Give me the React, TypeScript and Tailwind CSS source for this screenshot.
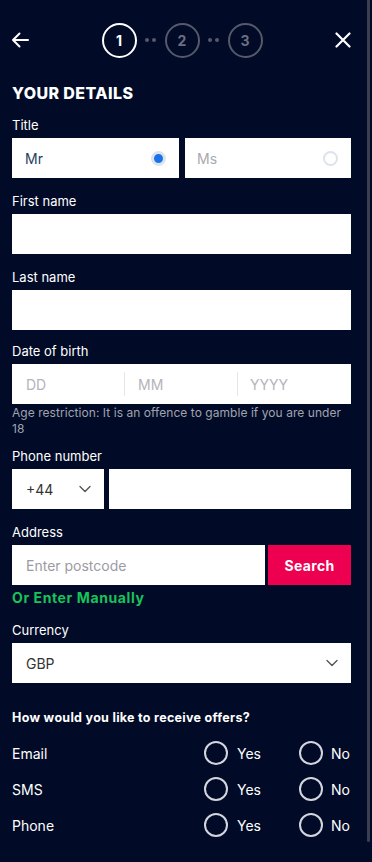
import React from "react";

const font = { fontFamily: "Inter, 'Noto Sans', sans-serif" };

function Label({ children }: { children: React.ReactNode }) {
  return <p className="text-[13px] leading-4 text-white mb-[5px]">{children}</p>;
}

function Chevron() {
  return (
    <svg width="12" height="8" viewBox="0 0 12 8" fill="none">
      <path d="M1 1.5l5 5 5-5" stroke="#555" strokeWidth="1.4" strokeLinecap="round" strokeLinejoin="round" />
    </svg>
  );
}

function Step({ n, active }: { n: number; active?: boolean }) {
  return (
    <div
      className={
        "w-[35px] h-[35px] rounded-full border-2 flex items-center justify-center text-[14px] font-bold " +
        (active ? "border-white text-white" : "border-[#55596b] text-[#6b6f80]")
      }
    >
      {n}
    </div>
  );
}

function Dots() {
  return (
    <div className="w-[28px] flex items-center justify-center gap-[3px]">
      <span className="w-[4px] h-[4px] rounded-full bg-[#55596b]" />
      <span className="w-[4px] h-[4px] rounded-full bg-[#55596b]" />
    </div>
  );
}

function OfferRow({ name }: { name: string }) {
  return (
    <div className="flex items-center h-[36px]">
      <span className="flex-1 text-[14px] text-white">{name}</span>
      <div className="flex items-center w-[147px]">
        <span className="w-[24px] h-[24px] rounded-full border-2 border-[#d3d6de]" />
        <span className="ml-[9px] text-[14px] text-white w-[62px]">Yes</span>
        <span className="w-[24px] h-[24px] rounded-full border-2 border-[#d3d6de]" />
        <span className="ml-[8px] text-[14px] text-white">No</span>
      </div>
    </div>
  );
}

export default function App() {
  return (
    <div className="relative w-[372px] min-h-[862px] bg-[#010b27]" style={font}>
      <div className="absolute right-[2px] top-0 w-[3px] h-[842px] rounded-b bg-[#3b3e50]" />
      <div className="h-[80px] pl-3 pr-[21px] flex items-center justify-between">
        <svg width="18" height="16" viewBox="0 0 18 16" fill="none" className="ml-[-1px]">
          <path d="M17 8H2M8.5 1.5L2 8l6.5 6.5" stroke="white" strokeWidth="2" strokeLinecap="round" strokeLinejoin="round" />
        </svg>
        <div className="flex items-center">
          <Step n={1} active />
          <Dots />
          <Step n={2} />
          <Dots />
          <Step n={3} />
        </div>
        <svg width="16" height="16" viewBox="0 0 16 16" fill="none">
          <path d="M1.5 1.5l13 13M14.5 1.5l-13 13" stroke="white" strokeWidth="2.2" strokeLinecap="round" />
        </svg>
      </div>

      <div className="px-3 pr-[21px]">
        <h1 className="text-[16px] leading-[26px] font-extrabold tracking-[0.4px] text-white">YOUR DETAILS</h1>

        <div className="mt-[11px]">
          <Label>Title</Label>
          <div className="flex gap-[6px]">
            <div className="flex-1 h-[40px] bg-white flex items-center justify-between pl-[13px] pr-[13px]">
              <span className="text-[14px] text-[#23405e]">Mr</span>
              <span className="w-[15px] h-[15px] rounded-full border-[3px] border-[#dde3ec] bg-[#1a73e8]" />
            </div>
            <div className="flex-1 h-[40px] bg-white flex items-center justify-between pl-[12px] pr-[13px]">
              <span className="text-[14px] text-[#a9a8b0]">Ms</span>
              <span className="w-[15px] h-[15px] rounded-full border-2 border-[#dde3ec]" />
            </div>
          </div>
        </div>

        <div className="mt-[15px]">
          <Label>First name</Label>
          <div className="h-[40px] bg-white" />
        </div>

        <div className="mt-[15px]">
          <Label>Last name</Label>
          <div className="h-[40px] bg-white" />
        </div>

        <div className="mt-[13px]">
          <Label>Date of birth</Label>
          <div className="h-[40px] bg-white grid grid-cols-3 items-center">
            <span className="pl-[14px] text-[14px] text-[#b5b4ba] border-r border-[#e3e6ec] h-[24px] flex items-center">DD</span>
            <span className="pl-[13px] text-[14px] text-[#b5b4ba] border-r border-[#e3e6ec] h-[24px] flex items-center">MM</span>
            <span className="pl-[12px] text-[14px] text-[#b5b4ba] h-[24px] flex items-center">YYYY</span>
          </div>
          <p className="max-w-[335px] text-[12px] leading-4 tracking-[0.05px] text-[#a0a3ae] mt-[1px]">
            Age restriction: It is an offence to gamble if you are under 18
          </p>
        </div>

        <div className="mt-[11px]">
          <Label>Phone number</Label>
          <div className="flex gap-[5px]">
            <div className="w-[92px] h-[40px] bg-white flex items-center justify-between pl-[14px] pr-[13px]">
              <span className="text-[14px] text-[#333]">+44</span>
              <Chevron />
            </div>
            <div className="flex-1 h-[40px] bg-white" />
          </div>
        </div>

        <div className="mt-[15px]">
          <Label>Address</Label>
          <div className="flex gap-[3px]">
            <div className="flex-1 h-[40px] bg-white flex items-center pl-[14px]">
              <span className="text-[14px] text-[#9c9ba3]">Enter postcode</span>
            </div>
            <button className="w-[83px] h-[40px] bg-[#ee0051] text-white text-[14px] font-bold tracking-[0.3px]">Search</button>
          </div>
          <p className="mt-[5px] text-[14px] leading-4 font-bold tracking-[0.6px] text-[#17c45a]">Or Enter Manually</p>
        </div>

        <div className="mt-[16px]">
          <Label>Currency</Label>
          <div className="h-[40px] bg-white flex items-center justify-between pl-[14px] pr-[13px]">
            <span className="text-[14px] text-[#333]">GBP</span>
            <Chevron />
          </div>
        </div>

        <p className="mt-[27px] text-[12.5px] leading-4 font-bold tracking-[0.3px] text-white">How would you like to receive offers?</p>

        <div className="mt-[9px]">
          <OfferRow name="Email" />
          <OfferRow name="SMS" />
          <OfferRow name="Phone" />
        </div>
      </div>
    </div>
  );
}
